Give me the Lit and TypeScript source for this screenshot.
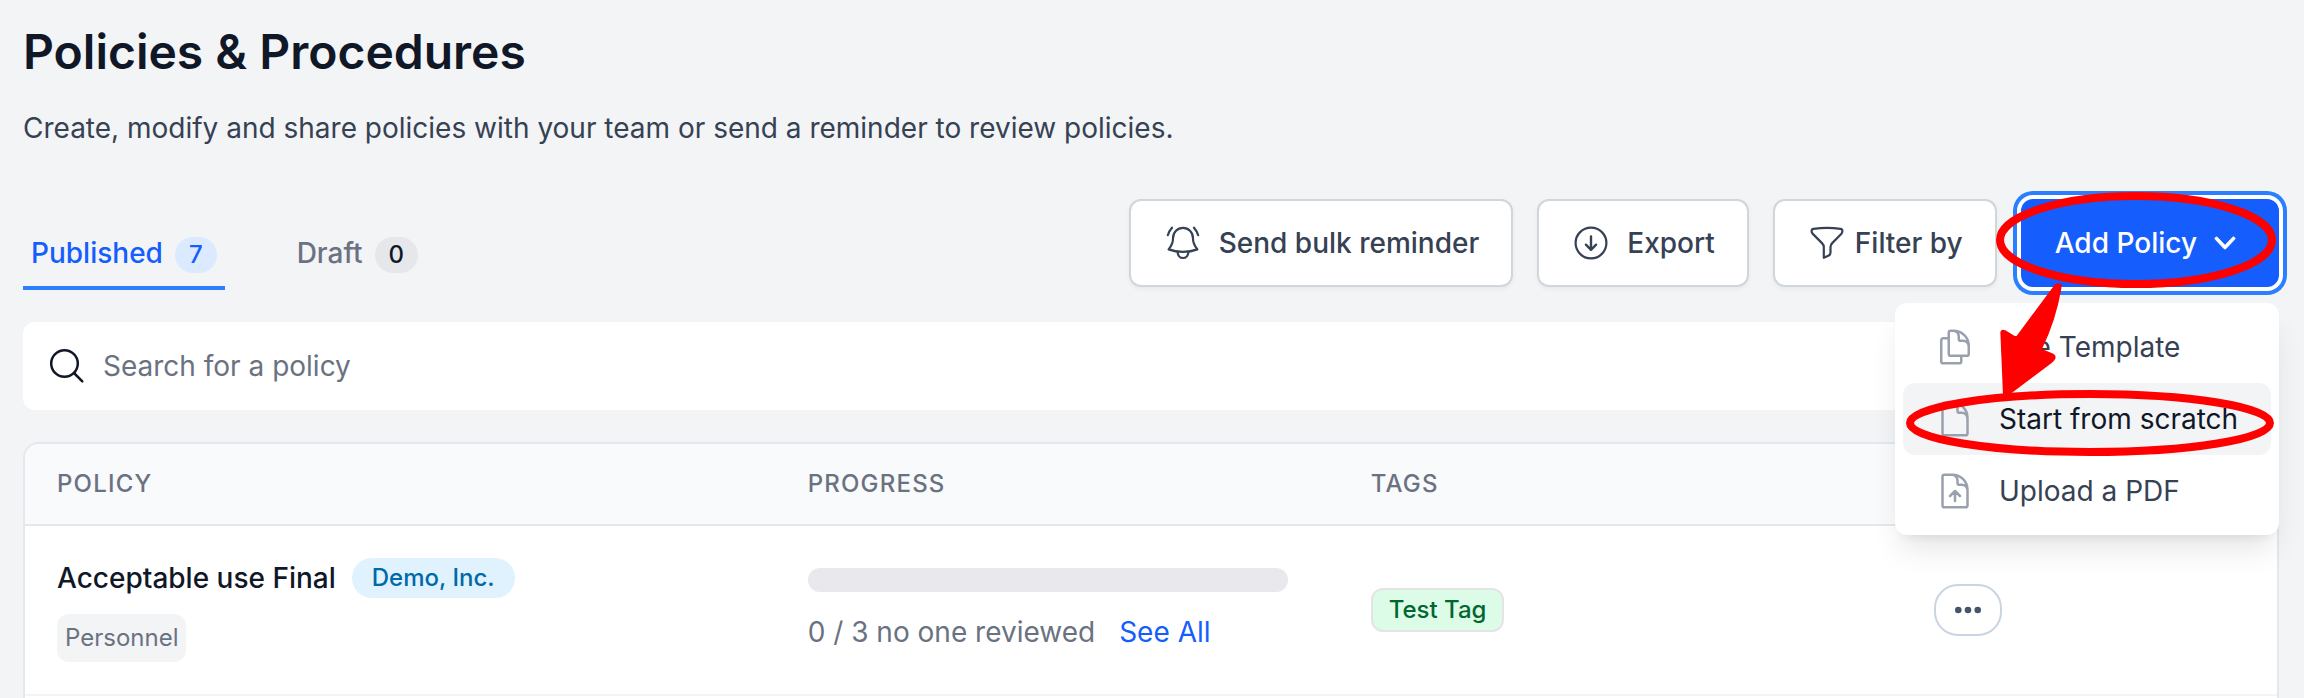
import { LitElement, html, css, svg } from "lit";
import { customElement, state } from "lit/decorators.js";
import { classMap } from "lit/directives/class-map.js";

const bell = svg`
  <path d="M20 4.8A9.9 9.9 0 0 0 10.1 14.7c0 5.8-1.7 8.4-4.5 11.7 8.6 3.3 20.2 3.3 28.8 0-2.8-3.3-4.5-5.9-4.5-11.7A9.9 9.9 0 0 0 20 4.8Z"/>
  <path d="M14.6 28.8c0 3.5 2.3 6.2 5.4 6.2s5.4-2.7 5.4-6.2M9 4.7C7 7 5.6 9.4 4.8 12.2M31 4.7c2 2.3 3.4 4.7 4.2 7.5"/>`;
const exportIcon = svg`
  <circle cx="20" cy="20" r="15.4"/>
  <path stroke-width="2.4" d="M20 13.5v13M14.9 21.7l5.1 5.1 5.1-5.1"/>`;
const funnel = svg`
  <path d="M20 4.9c-4.6 0-9.1.3-13.5.9-1.2.2-1.9 1-1.9 2.1 0 1.2.4 2.2 1.2 3l9.2 9.2c1.1 1.1 1.8 2.4 1.8 4v10.7l5-2.4c1.2-.6 1.7-1.5 1.7-2.8v-5.5c0-1.6.6-2.9 1.7-4l9-9.2c.8-.8 1.2-1.8 1.2-3 0-1.1-.7-1.9-1.9-2.1C29.1 5.2 24.6 4.9 20 4.9Z"/>`;

const duplicate = svg`<path d="M15.75 17.25v3.375c0 .621-.504 1.125-1.125 1.125h-9.75a1.125 1.125 0 0 1-1.125-1.125V7.875c0-.621.504-1.125 1.125-1.125H6.75a9.06 9.06 0 0 1 1.5.124m7.5 10.376h3.375c.621 0 1.125-.504 1.125-1.125V11.25c0-4.46-3.243-8.161-7.5-8.876a9.06 9.06 0 0 0-1.5-.124H9.375c-.621 0-1.125.504-1.125 1.125v3.5m7.5 10.375H9.375a1.125 1.125 0 0 1-1.125-1.125v-9.25m12 6.625v-1.875a3.375 3.375 0 0 0-3.375-3.375h-1.5a1.125 1.125 0 0 1-1.125-1.125v-1.5a3.375 3.375 0 0 0-3.375-3.375H9.75"/>`;
const blank = svg`<path d="M19.5 14.25v-2.625a3.375 3.375 0 0 0-3.375-3.375h-1.5A1.125 1.125 0 0 1 13.5 7.125v-1.5a3.375 3.375 0 0 0-3.375-3.375H8.25m2.25 0H5.625c-.621 0-1.125.504-1.125 1.125v17.25c0 .621.504 1.125 1.125 1.125h12.75c.621 0 1.125-.504 1.125-1.125V11.25a9 9 0 0 0-9-9Z"/>`;
const upload = svg`${blank}<path d="m15 15-3-3m0 0-3 3m3-3v6"/>`;

const icon = (shape: unknown) => html`<svg class="icon" viewBox="0 0 40 40" aria-hidden="true">${shape}</svg>`;

const tabs = [
  { label: "Published", count: 7 },
  { label: "Draft", count: 0 },
];

const menuItems = [
  { label: "Use Template", shape: duplicate },
  { label: "Start from scratch", shape: blank },
  { label: "Upload a PDF", shape: upload },
];

const policies = [
  { name: "Acceptable use Final", owner: "Demo, Inc.", category: "Personnel", done: 0, total: 3, note: "no one reviewed", tag: "Test Tag" },
];

@customElement("app-root")
export class AppRoot extends LitElement {
  @state() private tab = 0;
  @state() private active = 1;

  static styles = css`
    :host {
      display: flex;
      flex-direction: column;
      box-sizing: border-box;
      min-height: 100vh;
      padding: 20px 25px 0 23px;
      background: #f3f4f6;
      color: #101828;
      font-family: Inter, "Liberation Sans", sans-serif;
      font-size: 28px;
      line-height: 40px;
    }
    *, *::before, *::after { box-sizing: border-box; }
    button, input { font: inherit; color: inherit; margin: 0; }
    button { cursor: pointer; }
    svg { display: block; flex: none; }
    h1 { margin: 0; font-size: 48px; line-height: 64px; font-weight: 600; }
    .intro { margin: 24px 0 0; color: #364153; }

    .toolbar { display: flex; justify-content: space-between; align-items: flex-start; margin-top: 51px; }
    .tabs { display: flex; gap: 64px; padding-top: 34px; }
    .tab {
      height: 57px;
      padding: 0 8px 13px;
      border: 0;
      border-bottom: 4px solid transparent;
      background: none;
      color: #6a7282;
      font-weight: 500;
      white-space: nowrap;
    }
    .tab.on { border-color: #2b7fff; color: #155dfc; }
    .count {
      display: inline-block;
      margin-left: 12px;
      padding: 2px 14px;
      border-radius: 18px;
      background: #e5e7eb;
      color: #101828;
      font-size: 24px;
      line-height: 32px;
    }
    .tab.on .count { background: #dbeafe; color: #155dfc; }

    .actions { display: flex; gap: 24px; }
    .btn {
      display: flex;
      align-items: center;
      gap: 16px;
      height: 88px;
      padding: 0 32px;
      border: 2px solid #d1d5dc;
      border-radius: 12px;
      background: #fff;
      color: #364153;
      font-weight: 500;
      white-space: nowrap;
      box-shadow: 0 2px 4px rgb(0 0 0 / 0.05);
    }
    .btn.near { gap: 8px; }
    .btn.primary {
      border-color: #155dfc;
      background: #155dfc;
      color: #fff;
      box-shadow: 0 0 0 4px #fff, 0 0 0 8px #2b7fff;
    }
    .icon { width: 40px; height: 40px; fill: none; stroke: #364153; stroke-width: 2.2; stroke-linecap: round; stroke-linejoin: round; }
    .chevron { width: 40px; height: 40px; fill: #fff; stroke: #fff; stroke-width: 0.4; }

    .dropdown { position: relative; }
    .menu {
      position: absolute;
      z-index: 1;
      top: calc(100% + 16px);
      right: 0;
      width: 384px;
      padding: 8px;
      border-radius: 12px;
      background: #fff;
      box-shadow: 0 20px 30px -6px rgb(0 0 0 / 0.1), 0 8px 12px -8px rgb(0 0 0 / 0.1);
    }
    .item {
      display: flex;
      align-items: center;
      gap: 24px;
      width: 100%;
      padding: 16px 32px;
      border: 0;
      border-radius: 12px;
      background: none;
      color: #364153;
      text-align: left;
      white-space: nowrap;
    }
    .item.on { background: #f3f4f6; color: #101828; }
    .item svg { width: 40px; height: 40px; fill: none; stroke: #99a1af; stroke-width: 1.5; stroke-linecap: round; stroke-linejoin: round; }
    .markup { position: absolute; z-index: 2; top: -29px; right: -25px; width: 424px; height: 380px; pointer-events: none; }

    .search {
      display: flex;
      align-items: center;
      gap: 16px;
      height: 88px;
      margin-top: 32px;
      padding: 0 24px;
      border-radius: 12px;
      background: #fff;
    }
    .search .icon { stroke: #101828; stroke-width: 2.5; }
    .search input { flex: 1; min-width: 0; height: 56px; padding: 0; border: 0; outline: 0; background: none; }
    .search input::placeholder { color: #6a7282; opacity: 1; }

    .card { flex: 1; margin-top: 32px; border: 2px solid #e2e8f0; border-bottom: 0; border-radius: 16px 16px 0 0; background: #fff; overflow: hidden; }
    table { width: 100%; table-layout: fixed; border-collapse: separate; border-spacing: 0; }
    th, td { padding: 0 32px; text-align: left; }
    th {
      height: 82px;
      border-bottom: 2px solid #e5e7eb;
      background: #f9fafb;
      color: #6a7282;
      font-size: 24px;
      line-height: 32px;
      font-weight: 500;
      letter-spacing: 0.05em;
      text-transform: uppercase;
    }
    .wide { width: 33.333%; }
    .mid { width: 25%; }
    td { height: 170px; border-bottom: 2px solid #f3f4f6; vertical-align: middle; }
    .name { display: flex; align-items: center; gap: 16px; font-weight: 500; white-space: nowrap; }
    .owner { padding: 4px 20px; border-radius: 20px; background: #dff2fe; color: #0069a8; font-size: 24px; line-height: 32px; }
    .category { display: inline-block; margin-top: 16px; padding: 8px; border-radius: 12px; background: #f3f4f6; color: #6a7282; font-size: 24px; line-height: 32px; vertical-align: top; }
    .track { width: 480px; max-width: 100%; height: 24px; border-radius: 12px; background: #e8e8ed; overflow: hidden; }
    .fill { height: 100%; background: #155dfc; }
    .reviewed { display: flex; gap: 24px; margin-top: 20px; color: #6a7282; white-space: nowrap; }
    a { color: #155dfc; text-decoration: none; }
    .tag { display: inline-block; padding: 4px 16px; border: 2px solid #e4e4e7; border-radius: 12px; background: #dcfce7; color: #016630; font-size: 24px; line-height: 32px; font-weight: 500; vertical-align: top; }
    .more { display: flex; align-items: center; justify-content: center; width: 68px; height: 52px; padding: 0; border: 2px solid #cad5e2; border-radius: 24px; background: #fff; }
    .more svg { width: 28px; height: 8px; fill: #45556c; }
  `;

  render() {
    return html`
      <h1>Policies &amp; Procedures</h1>
      <p class="intro">Create, modify and share policies with your team or send a reminder to review policies.</p>

      <div class="toolbar">
        <div class="tabs" role="tablist">
          ${tabs.map((t, i) => html`
            <button class=${classMap({ tab: true, on: i === this.tab })} role="tab" aria-selected=${i === this.tab} @click=${() => (this.tab = i)}>${t.label}<span class="count">${t.count}</span></button>`)}
        </div>
        <div class="actions">
          <button class="btn">${icon(bell)}Send bulk reminder</button>
          <button class="btn">${icon(exportIcon)}Export</button>
          <button class="btn near">${icon(funnel)}Filter by</button>
          <div class="dropdown">
            <button class="btn near primary" aria-haspopup="menu" aria-expanded="true">
              Add Policy
              <svg class="chevron" viewBox="0 0 20 20" aria-hidden="true"><path d="M5.23 7.21a.75.75 0 0 1 1.06.02L10 11.168l3.71-3.938a.75.75 0 1 1 1.08 1.04l-4.25 4.5a.75.75 0 0 1-1.08 0l-4.25-4.5a.75.75 0 0 1 .02-1.06Z"/></svg>
            </button>
            <div class="menu" role="menu">
              ${menuItems.map((m, i) => html`
                <button class=${classMap({ item: true, on: i === this.active })} role="menuitem" @mouseenter=${() => (this.active = i)}>
                  <svg viewBox="0 0 24 24" aria-hidden="true">${m.shape}</svg>${m.label}
                </button>`)}
            </div>
            <svg class="markup" viewBox="0 0 1272 1140" fill="none" stroke="#f00" stroke-width="24" aria-hidden="true">
              <ellipse cx="768" cy="210" rx="408" ry="132"/>
              <ellipse cx="630" cy="759" rx="540" ry="87"/>
              <path fill="#f00" stroke="none" d="M524 344Q534 336 545 343L544 356Q528 450 486 537L520 551Q529 556 526 566Q522 574 514 580L392 671L369 676L361 486Q364 475 376 481L408 500Z"/>
            </svg>
          </div>
        </div>
      </div>

      <div class="search">
        <label for="q" aria-label="Search for a policy">
          <svg class="icon" viewBox="0 0 40 40" aria-hidden="true"><circle cx="17.5" cy="17.5" r="13.3"/><path d="M27 27l8.3 8.3"/></svg>
        </label>
        <input id="q" type="text" placeholder="Search for a policy" />
      </div>

      <div class="card">
        <table>
          <thead>
            <tr><th class="wide">Policy</th><th class="mid">Progress</th><th class="mid">Tags</th><th></th></tr>
          </thead>
          <tbody>
            ${policies.map((p) => html`
              <tr>
                <td>
                  <div class="name">${p.name}<span class="owner">${p.owner}</span></div>
                  <span class="category">${p.category}</span>
                </td>
                <td>
                  <div class="track"><div class="fill" style="width:${(p.done / p.total) * 100}%"></div></div>
                  <div class="reviewed"><span>${p.done} / ${p.total} ${p.note}</span><a href="#reviews">See All</a></div>
                </td>
                <td><span class="tag">${p.tag}</span></td>
                <td>
                  <button class="more" aria-label="More actions">
                    <svg viewBox="0 0 28 8" aria-hidden="true"><circle cx="4.3" cy="4" r="3.3"/><circle cx="14" cy="4" r="3.3"/><circle cx="23.7" cy="4" r="3.3"/></svg>
                  </button>
                </td>
              </tr>`)}
          </tbody>
        </table>
      </div>
    `;
  }
}
